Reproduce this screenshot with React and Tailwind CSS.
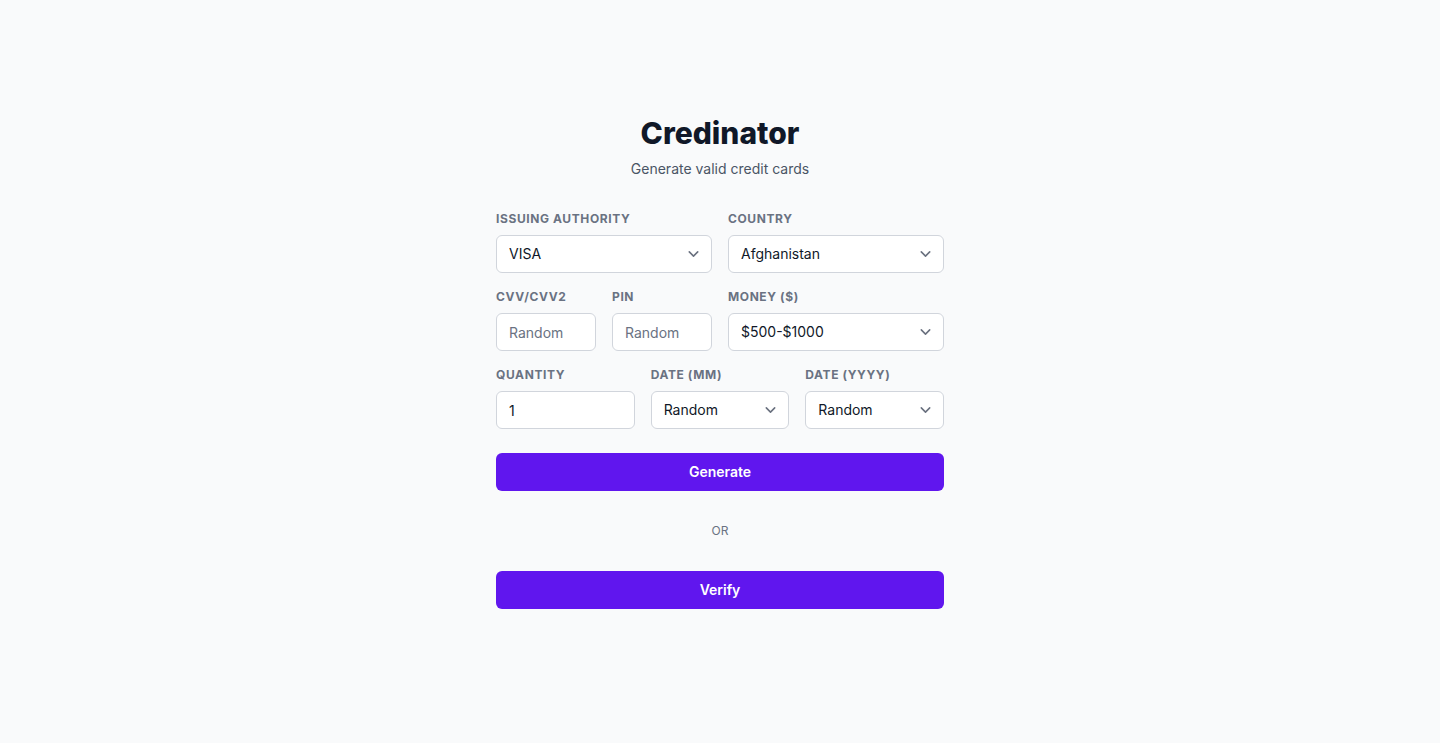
import React, { useState } from 'react';

const font = { fontFamily: 'Inter, "Noto Sans", sans-serif' };

function Chevron() {
  return (
    <svg
      className="pointer-events-none absolute right-2 top-1/2 -translate-y-1/2"
      width="21"
      height="21"
      viewBox="0 0 20 20"
      fill="none"
    >
      <path d="M6 8l4 4 4-4" stroke="#6b7280" strokeWidth="1.5" strokeLinecap="round" strokeLinejoin="round" />
    </svg>
  );
}

function Label({ children }) {
  return (
    <label className="mb-2 block text-xs font-bold uppercase leading-4 tracking-wider text-gray-500">
      {children}
    </label>
  );
}

function Select({ label, value, onChange, options }) {
  return (
    <div>
      <Label>{label}</Label>
      <div className="relative">
        <select
          value={value}
          onChange={(e) => onChange(e.target.value)}
          className="block h-[38px] w-full appearance-none rounded-md border border-gray-300 bg-white px-3 pr-10 text-sm text-gray-900 outline-none"
        >
          {options.map((o) => (
            <option key={o}>{o}</option>
          ))}
        </select>
        <Chevron />
      </div>
    </div>
  );
}

function Input({ label, value, onChange, placeholder }) {
  return (
    <div>
      <Label>{label}</Label>
      <input
        value={value}
        placeholder={placeholder}
        onChange={(e) => onChange(e.target.value)}
        className="block h-[38px] w-full rounded-md border border-gray-300 bg-white px-3 text-sm text-gray-900 outline-none placeholder:text-gray-500"
      />
    </div>
  );
}

export default function App() {
  const [issuer, setIssuer] = useState('VISA');
  const [country, setCountry] = useState('Afghanistan');
  const [cvv, setCvv] = useState('');
  const [pin, setPin] = useState('');
  const [money, setMoney] = useState('$500-$1000');
  const [quantity, setQuantity] = useState('1');
  const [month, setMonth] = useState('Random');
  const [year, setYear] = useState('Random');

  return (
    <div className="min-h-screen bg-gray-50 pt-[115px]" style={font}>
      <div className="mx-auto w-[448px]">
        <h1 className="text-center text-3xl font-extrabold text-gray-900">Credinator</h1>
        <p className="mt-2 text-center text-sm text-gray-600">Generate valid credit cards</p>

        <div className="mt-8 flex flex-col gap-4">
          <div className="grid grid-cols-2 gap-4">
            <Select
              label="Issuing Authority"
              value={issuer}
              onChange={setIssuer}
              options={['VISA', 'MasterCard', 'American Express', 'Discover', 'JCB']}
            />
            <Select
              label="Country"
              value={country}
              onChange={setCountry}
              options={['Afghanistan', 'Albania', 'Algeria', 'Andorra', 'Angola']}
            />
          </div>

          <div className="grid grid-cols-4 gap-4">
            <Input label="CVV/CVV2" value={cvv} onChange={setCvv} placeholder="Random" />
            <Input label="PIN" value={pin} onChange={setPin} placeholder="Random" />
            <div className="col-span-2">
              <Select
                label="Money ($)"
                value={money}
                onChange={setMoney}
                options={['$100-$500', '$500-$1000', '$1000-$5000', '$5000-$10000']}
              />
            </div>
          </div>

          <div className="grid grid-cols-3 gap-4">
            <Input label="Quantity" value={quantity} onChange={setQuantity} />
            <Select
              label="Date (MM)"
              value={month}
              onChange={setMonth}
              options={['Random', '01', '02', '03', '04', '05', '06', '07', '08', '09', '10', '11', '12']}
            />
            <Select
              label="Date (YYYY)"
              value={year}
              onChange={setYear}
              options={['Random', '2025', '2026', '2027', '2028', '2029', '2030']}
            />
          </div>
        </div>

        <button className="mt-6 h-[38px] w-full rounded-md bg-[#6016ee] text-sm font-semibold text-white">
          Generate
        </button>

        <div className="flex h-[80px] items-center justify-center text-xs text-gray-500">OR</div>

        <button className="h-[38px] w-full rounded-md bg-[#6016ee] text-sm font-semibold text-white">
          Verify
        </button>
      </div>
    </div>
  );
}
